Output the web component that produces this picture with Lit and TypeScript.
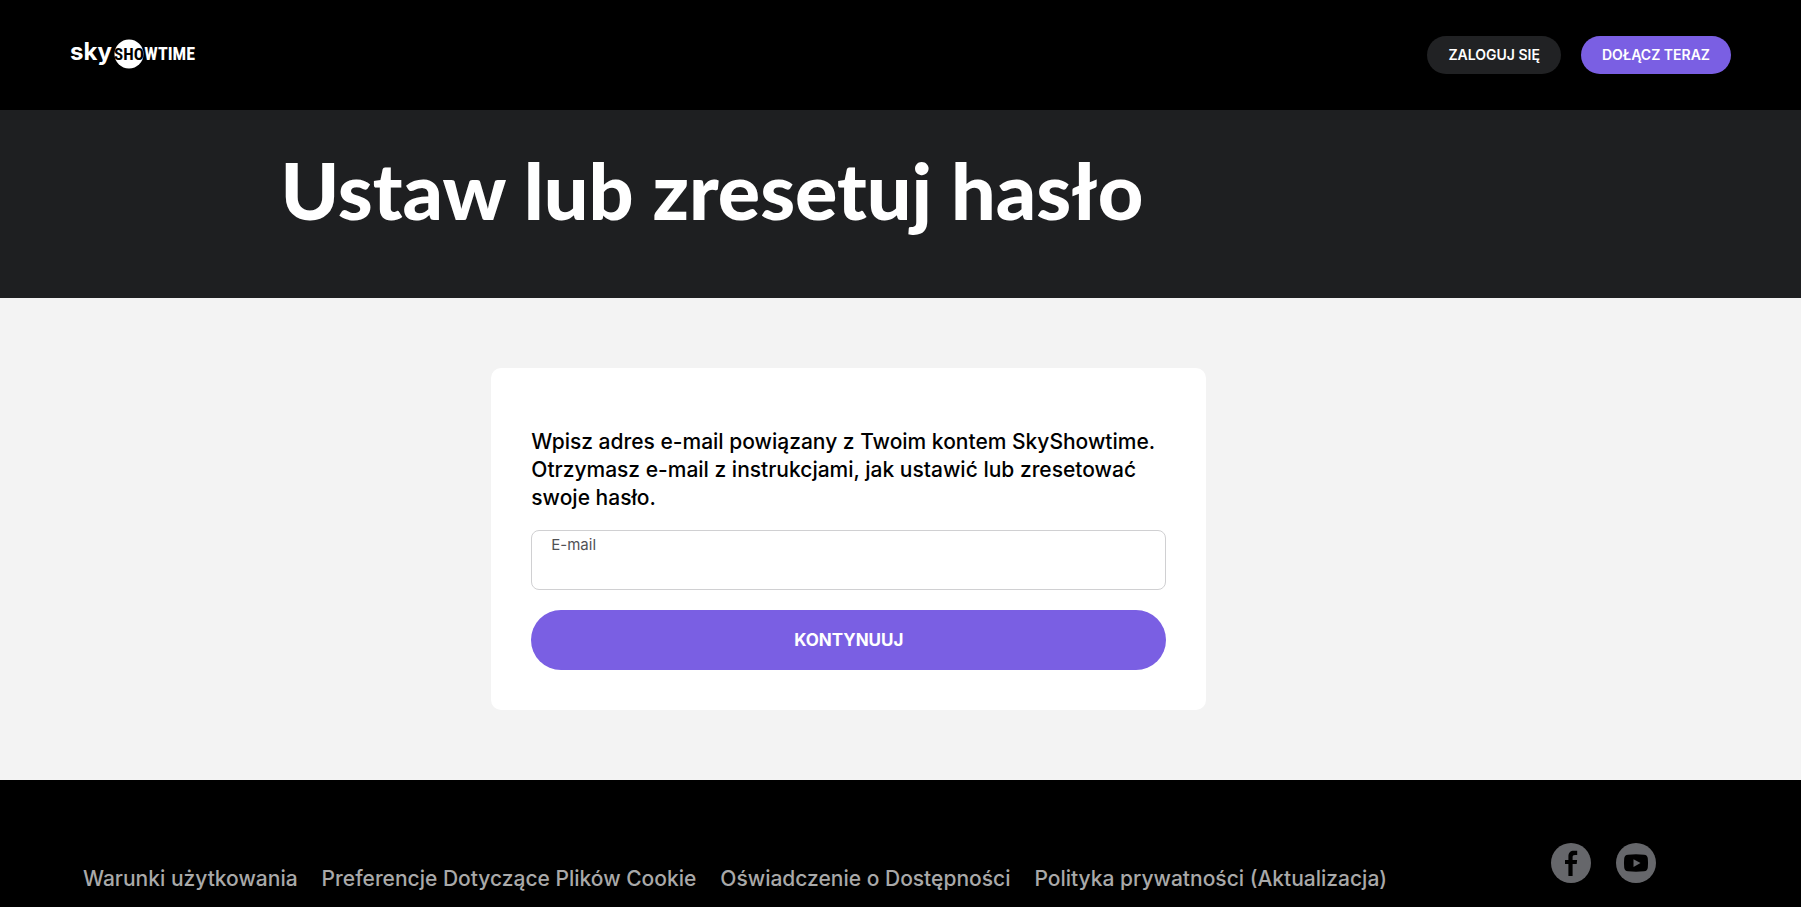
import { LitElement, html, css } from "lit";
import { customElement } from "lit/decorators.js";

const legalLinks = [
  "Warunki użytkowania",
  "Preferencje Dotyczące Plików Cookie",
  "Oświadczenie o Dostępności",
  "Polityka prywatności (Aktualizacja)",
];

@customElement("site-logo")
export class SiteLogo extends LitElement {
  static styles = css`
    :host { display: block; }
    svg { display: block; width: 126px; height: 38px; overflow: visible; }
    .sky { font: 700 24px "Inter", sans-serif; fill: #fff; }
    .show { font: 700 18px "Liberation Sans Narrow", "Roboto Condensed", "Open Sans Condensed", sans-serif; fill: #fff; }
    .cut { font-size: 17px; fill: #000; }
  `;
  render() {
    return html`<svg viewBox="0 0 126 38" role="img" aria-label="SkyShowtime">
      <circle cx="59" cy="18" r="14.5" fill="#fff" />
      <text class="sky" x="0" y="24">sky</text>
      <text class="show cut" x="59" y="24" text-anchor="middle">SHO</text>
      <text class="show" x="125" y="24" text-anchor="end">WTIME</text>
    </svg>`;
  }
}

@customElement("app-root")
export class AppRoot extends LitElement {
  static styles = css`
    :host {
      display: flex;
      flex-direction: column;
      min-height: 100vh;
      background: #000;
      color: #000;
      font-family: "Inter", "Open Sans", sans-serif;
    }
    * { box-sizing: border-box; }
    a { color: inherit; text-decoration: none; }
    header {
      display: flex;
      align-items: center;
      justify-content: space-between;
      padding: 36px 70px;
    }
    .actions { display: flex; gap: 20px; }
    .pill {
      padding: 0 21px;
      border-radius: 20px;
      background: #212224;
      color: #fff;
      font-size: 14px;
      font-weight: 600;
      line-height: 38px;
    }
    .primary { background: #7a5fe3; }
    .hero { padding: 32px 20px 60px; background: #1e1f21; color: #fff; }
    .column { max-width: 1240px; margin: 0 auto; }
    h1 { margin: 0; font-family: "Lato", "Inter", sans-serif; font-size: 79px; font-weight: 900; line-height: 96px; }
    main { padding: 70px 20px; background: #f3f3f3; }
    .card {
      width: 715px;
      max-width: 100%;
      margin-left: 17%;
      padding: 60px 40px 40px;
      border-radius: 10px;
      background: #fff;
    }
    .intro { margin: 0 0 18px; font-size: 21px; font-weight: 500; line-height: 28px; }
    form { display: grid; gap: 20px; }
    .field {
      display: grid;
      height: 60px;
      padding: 4px 19px;
      border: 1px solid #d0d0d2;
      border-radius: 8px;
    }
    .field label { color: #505155; font-size: 15px; line-height: 20px; }
    .field input { width: 100%; min-width: 0; padding: 0; border: 0; outline: 0; background: transparent; font: inherit; }
    .submit {
      height: 60px;
      border: 0;
      border-radius: 30px;
      background: #7a5fe3;
      color: #fff;
      font: inherit;
      font-size: 17px;
      font-weight: 700;
    }
    footer {
      display: flex;
      justify-content: space-between;
      gap: 24px;
      padding: 63px 145px 0 83px;
      color: #a9a9a9;
      font-size: 21px;
      font-weight: 500;
      line-height: 28px;
    }
    nav { display: flex; flex-wrap: wrap; gap: 0 24px; padding-top: 22px; }
    .social { display: flex; gap: 25px; }
    .social svg { display: block; width: 40px; height: 40px; }
  `;

  render() {
    return html`
      <header>
        <a href="#"><site-logo></site-logo></a>
        <div class="actions">
          <a class="pill" href="#">ZALOGUJ SIĘ</a>
          <a class="pill primary" href="#">DOŁĄCZ TERAZ</a>
        </div>
      </header>
      <section class="hero"><div class="column"><h1>Ustaw lub zresetuj hasło</h1></div></section>
      <main>
        <div class="column">
          <section class="card">
            <p class="intro">Wpisz adres e-mail powiązany z Twoim kontem SkyShowtime. Otrzymasz e-mail z instrukcjami, jak ustawić lub zresetować swoje hasło.</p>
            <form>
              <div class="field">
                <label for="email">E-mail</label>
                <input id="email" type="email" />
              </div>
              <button class="submit" type="submit">KONTYNUUJ</button>
            </form>
          </section>
        </div>
      </main>
      <footer>
        <nav>${legalLinks.map((label) => html`<a href="#">${label}</a>`)}</nav>
        <div class="social">
          <a href="#" aria-label="Facebook">
            <svg viewBox="0 0 40 40">
              <circle cx="20" cy="20" r="20" fill="#66676b" />
              <path d="M17.4 33V21H14V17h3.4v-3.3c0-4 2-5.900 5.400-5.900h3.400v4.100h-2.200c-1.800 0-2.400.7-2.400 2.300V17h4.500l-.4 4h-4.100v12z" fill="#000" />
            </svg>
          </a>
          <a href="#" aria-label="YouTube">
            <svg viewBox="0 0 40 40">
              <circle cx="20" cy="20" r="20" fill="#66676b" />
              <path d="M12 11.700Q20 11 28 11.700Q31.500 11.900 31.800 15.500Q32.300 20 31.800 24.500Q31.500 28 28 28.300Q20 29 12 28.300Q8.500 28 8.200 24.500Q7.700 20 8.200 15.500Q8.500 11.900 12 11.700Z" fill="#000" />
              <path d="M17.500 16.200l7 3.800-7 4z" fill="#66676b" />
            </svg>
          </a>
        </div>
      </footer>
    `;
  }
}
